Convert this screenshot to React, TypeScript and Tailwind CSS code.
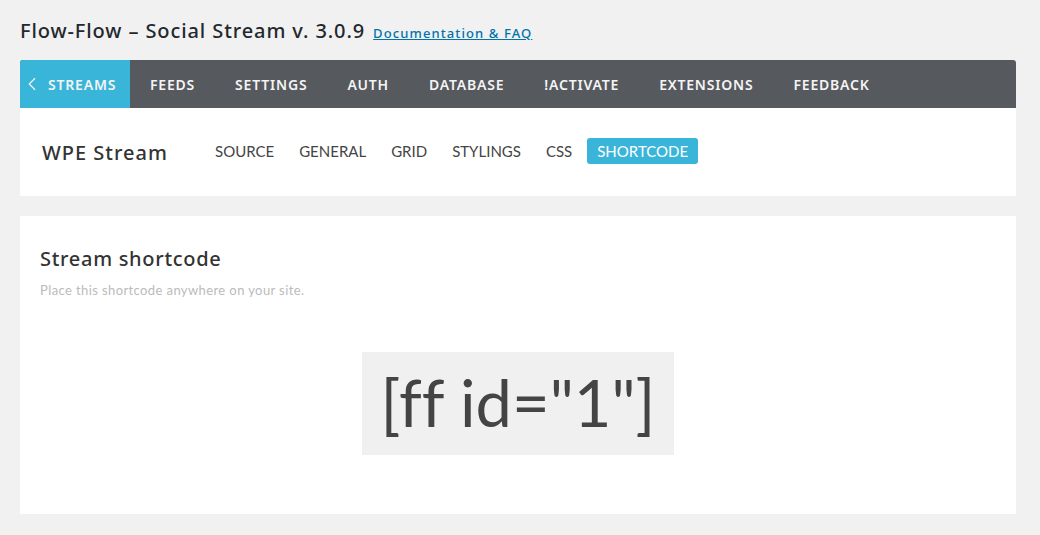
import { ChevronLeft } from "lucide-react";

const navItems = ["FEEDS", "SETTINGS", "AUTH", "DATABASE", "!ACTIVATE", "EXTENSIONS", "FEEDBACK"];
const tabs = ["SOURCE", "GENERAL", "GRID", "STYLINGS", "CSS"];

export default function App() {
  return (
    <div className="min-h-[535px] bg-[#f1f1f1] pl-5 pr-6 pt-[16px] pb-5 font-['Lato',sans-serif] text-[#333]">
      <div className="flex items-baseline gap-[8px]">
        <h1 className="font-['Noto_Sans',sans-serif] text-[20px] font-medium tracking-[0.9px] text-[#23282d]">
          Flow-Flow – Social Stream v. 3.0.9
        </h1>
        <a href="#" className="font-['Noto_Sans',sans-serif] text-[13px] font-medium tracking-[1.1px] text-[#0073aa] underline">
          Documentation &amp; FAQ
        </a>
      </div>

      <div className="mt-[14px] flex h-12 items-stretch overflow-hidden rounded-t-[3px] bg-[#56595e] font-['Noto_Sans',sans-serif] text-[14px] font-semibold tracking-[0.8px] text-[#f4f4f4]">
        <div className="flex w-[110px] items-center gap-[5px] bg-[#3ab5da] pl-[1px]">
          <ChevronLeft size={22} strokeWidth={1.3} />
          <span>STREAMS</span>
        </div>
        {navItems.map((item) => (
          <div key={item} className="flex items-center px-5">
            {item}
          </div>
        ))}
      </div>

      <div className="flex h-[88px] items-center bg-white pl-[22px]">
        <div className="w-[173px] pt-[2px] font-['Noto_Sans',sans-serif] text-[20px] font-medium tracking-[1px] text-[#333]">
          WPE Stream
        </div>
        <div className="mb-[2px] flex items-center gap-[25px] text-[15px] text-[#444]">
          {tabs.map((t) => (
            <span key={t}>{t}</span>
          ))}
          <span className="-ml-[10px] rounded-[3px] bg-[#3ab5da] px-[10px] py-[2px] text-white">SHORTCODE</span>
        </div>
      </div>

      <div className="mt-5 h-[298px] bg-white px-5 pt-[28px]">
        <h2 className="font-['Noto_Sans',sans-serif] text-[20px] font-medium tracking-[0.7px] text-[#333]">
          Stream shortcode
        </h2>
        <p className="mt-[7px] text-[13px] tracking-[0.4px] text-[#bbb]">Place this shortcode anywhere on your site.</p>
        <div className="mt-[51px] flex justify-center">
          <div className="flex h-[103px] w-[312px] items-center justify-center bg-[#f0f0f0] text-[65px] text-[#444] [font-variant-ligatures:none]">
            [ff id="1"]
          </div>
        </div>
      </div>
    </div>
  );
}
